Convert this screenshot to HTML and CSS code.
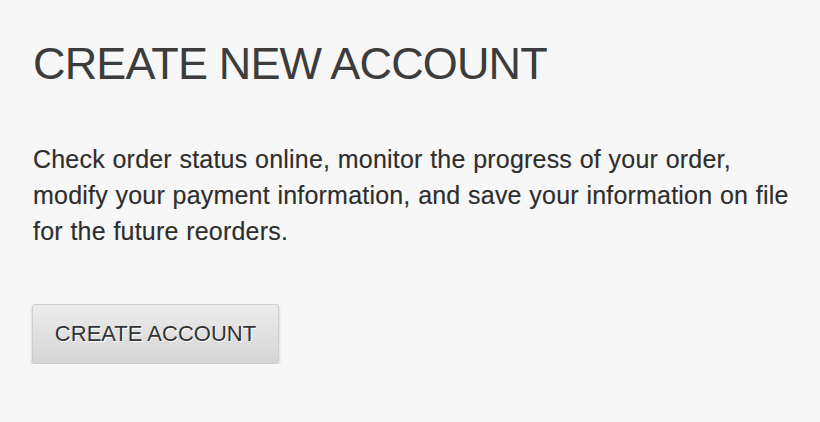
FILE: index.html
```html
<!DOCTYPE html>
<html>
<head>
	<meta charset="utf-8">
	<meta name="viewport" content="width=device-width, initial-scale=1">
	<title>Create New Account</title>
	<link rel="stylesheet" href="styles.css">
</head>
<body>
	<div class="panel">
		<h1 class="title">CREATE NEW ACCOUNT</h1>
		<p class="intro">Check order status online, monitor the progress of your order, modify your payment information, and save your information on file for the future reorders.</p>
		<button class="btn">CREATE ACCOUNT</button>
	</div>
</body>
</html>
```

FILE: styles.css
```css
body {
	margin: 0;
	padding: 0;
	background-color: #f7f7f7;
	font-family: "Liberation Sans", Arial, sans-serif;
	color: #333;
}

.panel {
	padding: 38px 20px 0 33px;
	display: flex;
	flex-direction: column;
	align-items: flex-start;
}

.title {
	margin: 0;
	font-size: 45px;
	font-weight: normal;
	line-height: 52px;
	letter-spacing: -0.85px;
	color: #3c3c3c;
}

.intro {
	margin: 51px 0 0 0;
	font-size: 25px;
	line-height: 36px;
	letter-spacing: 0.2px;
	word-spacing: 0.5px;
	max-width: 765px;
	color: #2e2e2e;
	-webkit-text-stroke: 0.15px #2e2e2e;
}

.btn {
	margin: 55px 0 0 -1px;
	width: 247px;
	height: 60px;
	padding: 0;
	border: 1px solid #cdcdcd;
	border-radius: 3px;
	background: linear-gradient(#ececec, #d5d5d5);
	box-shadow: 0 2px 3px rgba(0, 0, 0, 0.22);
	font-family: "Liberation Sans", Arial, sans-serif;
	font-size: 22px;
	color: #333;
	text-shadow: 1px 1px 0 #fff;
}
```
